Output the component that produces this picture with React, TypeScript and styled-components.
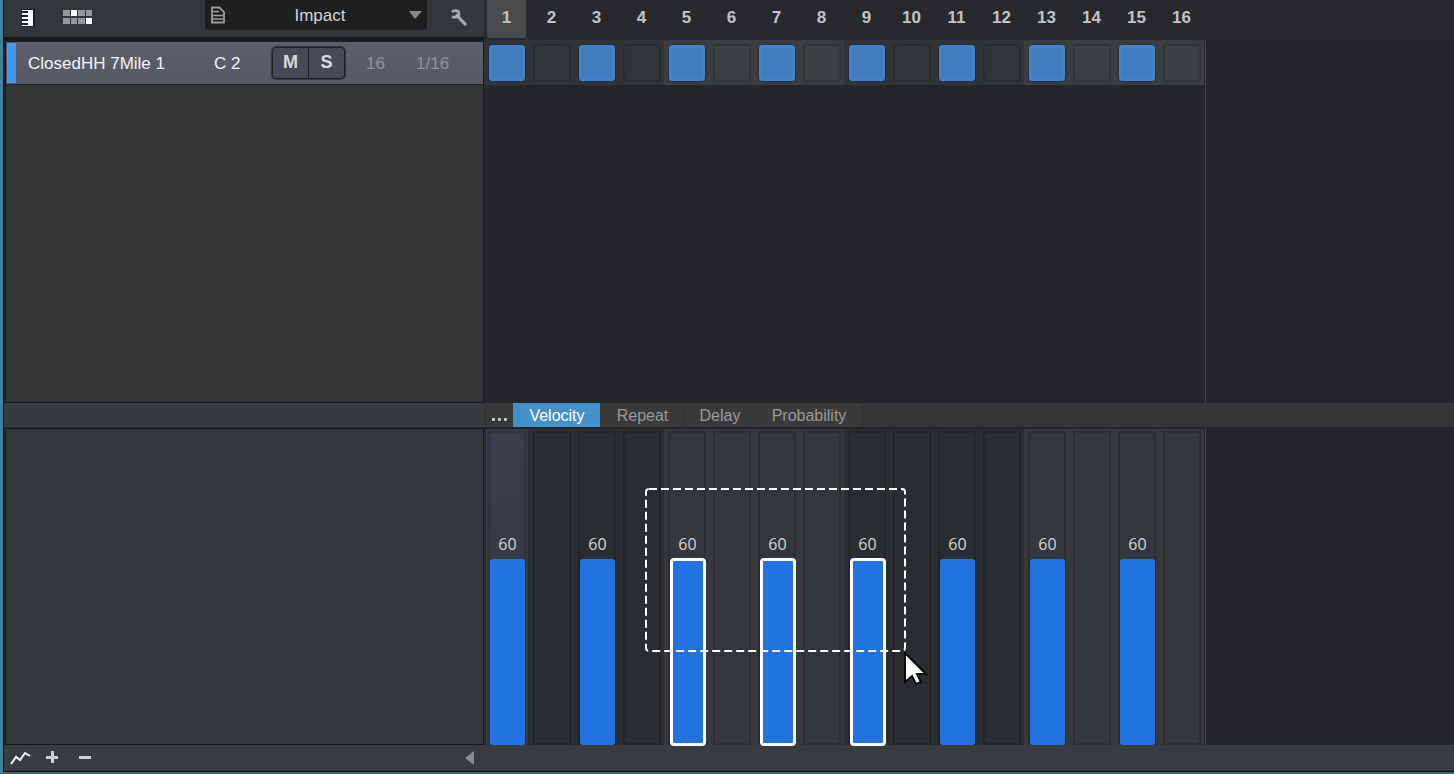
import React, { useState } from "react";
import styled, { createGlobalStyle, css } from "styled-components";

const GlobalStyle = createGlobalStyle`
  * { box-sizing: border-box; }
  body {
    margin: 0;
    background: #25262a;
    font-family: "Liberation Sans", Arial, sans-serif;
  }
  button, select, input { font: inherit; color: inherit; }
  button { padding: 0; border: 0; background: none; }
`;

const Frame = styled.div`
  display: flex;
  flex-direction: column;
  min-height: 100vh;
  border-left: 3px solid #43809f;
  border-bottom: 2px solid #2f6680;
  background: #25262a;
`;

const Row = styled.div<{ $grow?: boolean }>`
  display: flex;
  flex: ${(p) => (p.$grow ? "1 0 auto" : "0 0 auto")};
  border-left: 1px solid #15171a;
`;

const Side = styled.div`
  flex: 0 0 480px;
`;

const Main = styled.div`
  flex: 1;
  min-width: 0;
`;

const Toolbar = styled(Side)`
  display: flex;
  align-items: flex-start;
  height: 40px;
  background: #33363b;
  border-bottom: 3px solid #17181a;
`;

const IconButton = styled.button<{ $width: number; $height: number }>`
  display: flex;
  flex: none;
  align-items: center;
  justify-content: center;
  width: ${(p) => p.$width}px;
  height: ${(p) => p.$height}px;
  color: #b4b5b7;
`;

const InstrumentBox = styled.div`
  display: flex;
  flex: none;
  align-items: center;
  width: 222px;
  height: 30px;
  margin: 0 5px 0 101px;
  padding: 0 5px;
  background: #1f1f20;
  color: #d4d4d6;
`;

const InstrumentSelect = styled.select`
  flex: 1;
  height: 30px;
  appearance: none;
  border: 0;
  padding: 0 0 0 6px;
  background: transparent;
  font-size: 17px;
  text-align: center;
  text-align-last: center;
`;

const StepHeader = styled(Main)`
  display: flex;
  height: 40px;
  background: #28292c;
`;

const StepNumber = styled.div<{ $current?: boolean }>`
  flex: 0 0 45px;
  padding: 0 3px;
  text-align: center;
  font-size: 17px;
  font-weight: 700;
  line-height: 36px;
  color: #c2c3c4;

  span {
    display: block;
    height: 38px;
    border-radius: 0 0 3px 3px;
    background: ${(p) => (p.$current ? "#4a4b4c" : "transparent")};
  }
`;

const TrackList = styled(Side)`
  flex-basis: 479px;
  margin-left: 1px;
  background: #333435;
  border: 1px solid #17181a;
  border-top: 2px solid #1d1e20;
`;

const Track = styled.div`
  display: flex;
  align-items: center;
  height: 43px;
  background: linear-gradient(#5c606a, #555962);
  border-bottom: 1px solid #27282a;
  color: #f4f5f6;
  font-size: 17px;
  white-space: nowrap;
`;

const TrackColor = styled.div`
  width: 9px;
  height: 40px;
  margin: 0 12px 0 1px;
  background: #4596f3;
`;

const TrackCell = styled.span<{ $width: number; $dim?: boolean }>`
  width: ${(p) => p.$width}px;
  padding-top: 2px;
  color: ${(p) => (p.$dim ? "#92959c" : "inherit")};
`;

const MuteSolo = styled.div`
  display: flex;
  width: 73px;
  height: 32px;
  margin-right: 21px;
  border: 1px solid #1c1e21;
  border-radius: 4px;
  background: #464a54;
  box-shadow: 0 0 1px 1px #33363c;

  button {
    flex: 1;
    padding-bottom: 1px;
    font-size: 18px;
    font-weight: 700;
    color: #d9dbdd;
  }
  button + button { border-left: 1px solid #1c1e21; }
`;

const StepArea = styled(Main)`
  display: flex;
  align-items: stretch;
`;

const StepColumn = styled.div`
  flex: 0 0 722px;
  border-right: 1px solid #45464b;
  padding-right: 1px;
`;

const StepRow = styled.div`
  display: flex;
  height: 45px;
`;

const StepCell = styled.div<{ $light: boolean }>`
  flex: 0 0 45px;
  padding: 4px 3px 3px 4px;
  background: ${(p) => (p.$light ? "#3a3d3f" : "#313437")};
`;

const StepPad = styled.button<{ $on: boolean; $light: boolean }>`
  display: block;
  width: 38px;
  height: 38px;
  border: 1px solid ${(p) => (p.$light ? "#2d2f31" : "#26282a")};
  border-radius: 4px;
  background: ${(p) => (p.$light ? "#3b3f41" : "#313436")};
  box-shadow: inset 0 0 0 1px ${(p) => (p.$light ? "#36393b" : "#2d3032")};
  ${(p) =>
    p.$on &&
    css`
      background: #447dbf;
      box-shadow: inset 0 0 0 2px #4483cf;
    `}
`;

const DividerSide = styled(Side)`
  height: 25px;
  background: #373a3e;
  border-bottom: 1px solid #292b2e;
`;

const TabBar = styled(Main)`
  display: flex;
  height: 25px;
  padding-left: 3px;
  background: #343537;
  border-bottom: 1px solid #242528;
`;

const MoreButton = styled.button`
  display: flex;
  align-items: center;
  justify-content: center;
  gap: 3px;
  width: 26px;
  height: 24px;
  padding: 9px 2px 0 0;
  background: #3a3a3b;

  i {
    width: 3px;
    height: 3px;
    border-radius: 1px;
    background: #d0d1d2;
  }
`;

const Tab = styled.button<{ $active: boolean; $width: number }>`
  width: ${(p) => p.$width}px;
  height: 24px;
  padding: 1px 0 0 2px;
  border-right: 1px solid ${(p) => (p.$active ? "#4490c8" : "#343536")};
  font-size: 16px;
  line-height: 23px;
  background: ${(p) => (p.$active ? "#4490c8" : "#3a3a3b")};
  color: ${(p) => (p.$active ? "#ffffff" : "#989a9c")};
`;

const LowerSide = styled(Side)`
  flex-basis: 479px;
  margin-left: 1px;
  background: #34373c;
  border: 1px solid #17181a;
`;

const LaneArea = styled(Main)`
  position: relative;
  display: flex;
`;

const LaneStrip = styled.div`
  display: flex;
  flex: 0 0 722px;
  height: 317px;
  border-right: 1px solid #45464b;
`;

const LaneCell = styled.div<{ $light: boolean; $current: boolean }>`
  flex: 0 0 45px;
  padding: 2px 3px 0 4px;
  background: ${(p) => (p.$light ? "#36383c" : "#2b2d30")};
  border-top: 1px solid #222326;
  ${(p) =>
    p.$current &&
    css`
      background: linear-gradient(90deg, #2b2d30 2px, #363a41 2px, #363a41 44px, #2b2d30 44px);
    `}
`;

const LaneBox = styled.label<{ $light: boolean; $current: boolean }>`
  position: relative;
  display: flex;
  flex-direction: column;
  justify-content: flex-end;
  width: 38px;
  height: 314px;
  border: 2px solid ${(p) => (p.$light ? "#2b2d30" : "#232527")};
  background: ${(p) => (p.$light ? "#33363a" : "#2a2d2f")};
  ${(p) =>
    p.$current &&
    css`
      border-color: #31343a;
      background: linear-gradient(#3a3e48, #33363c);
    `}
`;

const LaneInput = styled.input`
  position: absolute;
  inset: 0;
  width: 100%;
  height: 100%;
  margin: 0;
  opacity: 0;
  writing-mode: vertical-lr;
  direction: rtl;
`;

const LaneValue = styled.span`
  margin-right: -1px;
  padding-bottom: 3px;
  text-align: center;
  font-family: "Open Sans", "Noto Sans", sans-serif;
  font-size: 16px;
  line-height: 24px;
  color: #d3d6d8;
`;

const VelocityBar = styled.div<{ $selected: boolean }>`
  flex: none;
  width: 35px;
  margin-bottom: -2px;
  border-radius: 3px;
  background: #2273df;
  ${(p) =>
    p.$selected &&
    css`
      width: 34px;
      margin-left: 1px;
      border: 2px solid #ffffff;
      box-shadow: 0 0 0 1px #ffffff;
    `}
`;

const Marquee = styled.svg`
  position: absolute;
  left: 161px;
  top: 60px;
  pointer-events: none;
`;

const Pointer = styled.svg`
  position: absolute;
  left: 420px;
  top: 224px;
  pointer-events: none;
`;

const Footer = styled.div`
  display: flex;
  align-items: center;
  flex: none;
  height: 27px;
  padding-left: 3px;
  background: #383b40;
  border-left: 1px solid #15171a;
  border-bottom: 1px solid #0d0f11;
`;

const FooterTools = styled.div`
  display: flex;
  width: 450px;
`;

const steps = Array.from({ length: 16 }, (_, i) => i + 1);
const tabs = [
  { name: "Velocity", width: 87 },
  { name: "Repeat", width: 84 },
  { name: "Delay", width: 71 },
  { name: "Probability", width: 107 },
];
const selectedSteps = [5, 7, 9];
const isLight = (step: number) => Math.floor((step - 1) / 4) % 2 === 1;

const KeysIcon = () => (
  <svg width="14" height="18" viewBox="0 0 14 18" shapeRendering="crispEdges">
    <path d="M1 0h13v18H1z" fill="#1c1d20" />
    <path d="M1 1h11v16H1z" fill="#f8f6f8" />
    <path d="M0 2h7v2H0zM0 6h7v2H0zM0 10h7v2H0zM0 14h7v2H0z" fill="#1c1d20" />
  </svg>
);

const PatternIcon = () => (
  <svg width="30" height="14" viewBox="0 0 30 14" shapeRendering="crispEdges">
    <path
      d="M0 0h7v6H0zM15 0h7v6h-7zM23 0h6v6h-6zM0 8h7v6H0zM8 8h6v6H8zM15 8h7v6h-7z"
      fill="#98999c"
    />
    <path d="M8 0h6v6H8zM23 8h6v6h-6z" fill="#ffffff" />
  </svg>
);

const PresetIcon = () => (
  <svg width="15" height="18" viewBox="0 0 15 18" fill="none" stroke="#9b9c9b">
    <path d="M2 1.5H9.5L14 6V16.5H2Z" strokeWidth="1.8" />
    <path d="M2 5.5H9M2 9.5H13M2 13H13" strokeWidth="1.6" />
  </svg>
);

const WrenchIcon = () => (
  <svg width="17" height="17" viewBox="0 0 17 17" fill="none" stroke="#a9abad">
    <path d="M2 3C4 1 9 1 9 5C9 8 5 9 2 7.5" strokeWidth="2.8" />
    <path d="M7 6.5L15 15" strokeWidth="3.2" strokeLinecap="round" />
  </svg>
);

export default function App() {
  const [active, setActive] = useState<number[]>([1, 3, 5, 7, 9, 11, 13, 15]);
  const [tab, setTab] = useState("Velocity");
  const [velocity, setVelocity] = useState<number[]>(steps.map(() => 60));

  const toggle = (step: number) =>
    setActive((on) => (on.includes(step) ? on.filter((s) => s !== step) : [...on, step]));

  return (
    <Frame>
      <GlobalStyle />
      <Row>
        <Toolbar>
          <IconButton $width={47} $height={36} aria-label="Keyboard view">
            <KeysIcon />
          </IconButton>
          <IconButton $width={53} $height={34} aria-label="Pattern view">
            <PatternIcon />
          </IconButton>
          <InstrumentBox>
            <PresetIcon />
            <InstrumentSelect aria-label="Instrument" defaultValue="Impact">
              <option>Impact</option>
            </InstrumentSelect>
            <svg width="13" height="8" viewBox="0 0 13 8">
              <path d="M0 0h13L6 8z" fill="#8a8b8c" />
            </svg>
          </InstrumentBox>
          <IconButton $width={52} $height={34} aria-label="Settings">
            <WrenchIcon />
          </IconButton>
        </Toolbar>
        <StepHeader>
          {steps.map((step) => (
            <StepNumber key={step} $current={step === 1}>
              <span>{step}</span>
            </StepNumber>
          ))}
        </StepHeader>
      </Row>

      <Row $grow>
        <TrackList>
          <Track>
            <TrackColor />
            <TrackCell $width={186}>ClosedHH 7Mile 1</TrackCell>
            <TrackCell $width={58}>C 2</TrackCell>
            <MuteSolo>
              <button aria-label="Mute">M</button>
              <button aria-label="Solo">S</button>
            </MuteSolo>
            <TrackCell $width={50} $dim>16</TrackCell>
            <TrackCell $width={50} $dim>1/16</TrackCell>
          </Track>
        </TrackList>
        <StepArea>
          <StepColumn>
            <StepRow>
              {steps.map((step) => (
                <StepCell key={step} $light={isLight(step)}>
                  <StepPad
                    $on={active.includes(step)}
                    $light={isLight(step)}
                    aria-label={`Step ${step}`}
                    aria-pressed={active.includes(step)}
                    onClick={() => toggle(step)}
                  />
                </StepCell>
              ))}
            </StepRow>
          </StepColumn>
        </StepArea>
      </Row>

      <Row>
        <DividerSide />
        <TabBar role="tablist">
          <MoreButton aria-label="More lanes">
            <i />
            <i />
            <i />
          </MoreButton>
          {tabs.map(({ name, width }) => (
            <Tab
              key={name}
              role="tab"
              aria-selected={tab === name}
              $active={tab === name}
              $width={width}
              onClick={() => setTab(name)}
            >
              {name}
            </Tab>
          ))}
        </TabBar>
      </Row>

      <Row>
        <LowerSide />
        <LaneArea>
          <LaneStrip>
            {steps.map((step, i) => (
              <LaneCell key={step} $light={isLight(step)} $current={step === 1}>
                <LaneBox $light={isLight(step)} $current={step === 1}>
                  {active.includes(step) && (
                    <>
                      <LaneValue>{velocity[i]}</LaneValue>
                      <VelocityBar
                        $selected={selectedSteps.includes(step)}
                        style={{ height: `${velocity[i]}%` }}
                      />
                    </>
                  )}
                  <LaneInput
                    type="range"
                    min={0}
                    max={90}
                    value={velocity[i]}
                    aria-label={`Velocity of step ${step}`}
                    onChange={(e) =>
                      setVelocity((all) => all.map((v, n) => (n === i ? Number(e.target.value) : v)))
                    }
                  />
                </LaneBox>
              </LaneCell>
            ))}
          </LaneStrip>
          <Marquee width="261" height="164" viewBox="0 0 261 164" fill="none">
            <rect
              x="1"
              y="1"
              width="259"
              height="162"
              rx="3"
              stroke="#ffffff"
              strokeWidth="2"
              strokeDasharray="8 4"
            />
          </Marquee>
          <Pointer width="24" height="34" viewBox="0 0 24 34">
            <path
              d="M1 1V30L8 24L12 32L17 30L13 22H22Z"
              fill="#ffffff"
              stroke="#0b0b0c"
              strokeWidth="2"
            />
          </Pointer>
        </LaneArea>
      </Row>

      <Footer>
        <FooterTools>
          <IconButton $width={28} $height={28} aria-label="Automation">
            <svg width="22" height="14" viewBox="0 0 22 14" fill="none">
              <path d="M1 13L6 6L10 9L15 2L20 5" stroke="#f4f4f4" strokeWidth="2" />
            </svg>
          </IconButton>
          <IconButton $width={34} $height={26} aria-label="Add">
            <svg width="12" height="12" viewBox="0 0 12 12">
              <path d="M5 0h3v5h4v3H8v4H5V8H0V5h5z" fill="#cfd1d3" />
            </svg>
          </IconButton>
          <IconButton $width={32} $height={27} aria-label="Remove">
            <svg width="12" height="3" viewBox="0 0 12 3">
              <path d="M0 0h12v3H0z" fill="#cfd1d3" />
            </svg>
          </IconButton>
        </FooterTools>
        <IconButton $width={24} $height={26} aria-label="Scroll left">
          <svg width="9" height="14" viewBox="0 0 9 14">
            <path d="M9 0v14L0 7z" fill="#8b8c8e" />
          </svg>
        </IconButton>
      </Footer>
    </Frame>
  );
}
